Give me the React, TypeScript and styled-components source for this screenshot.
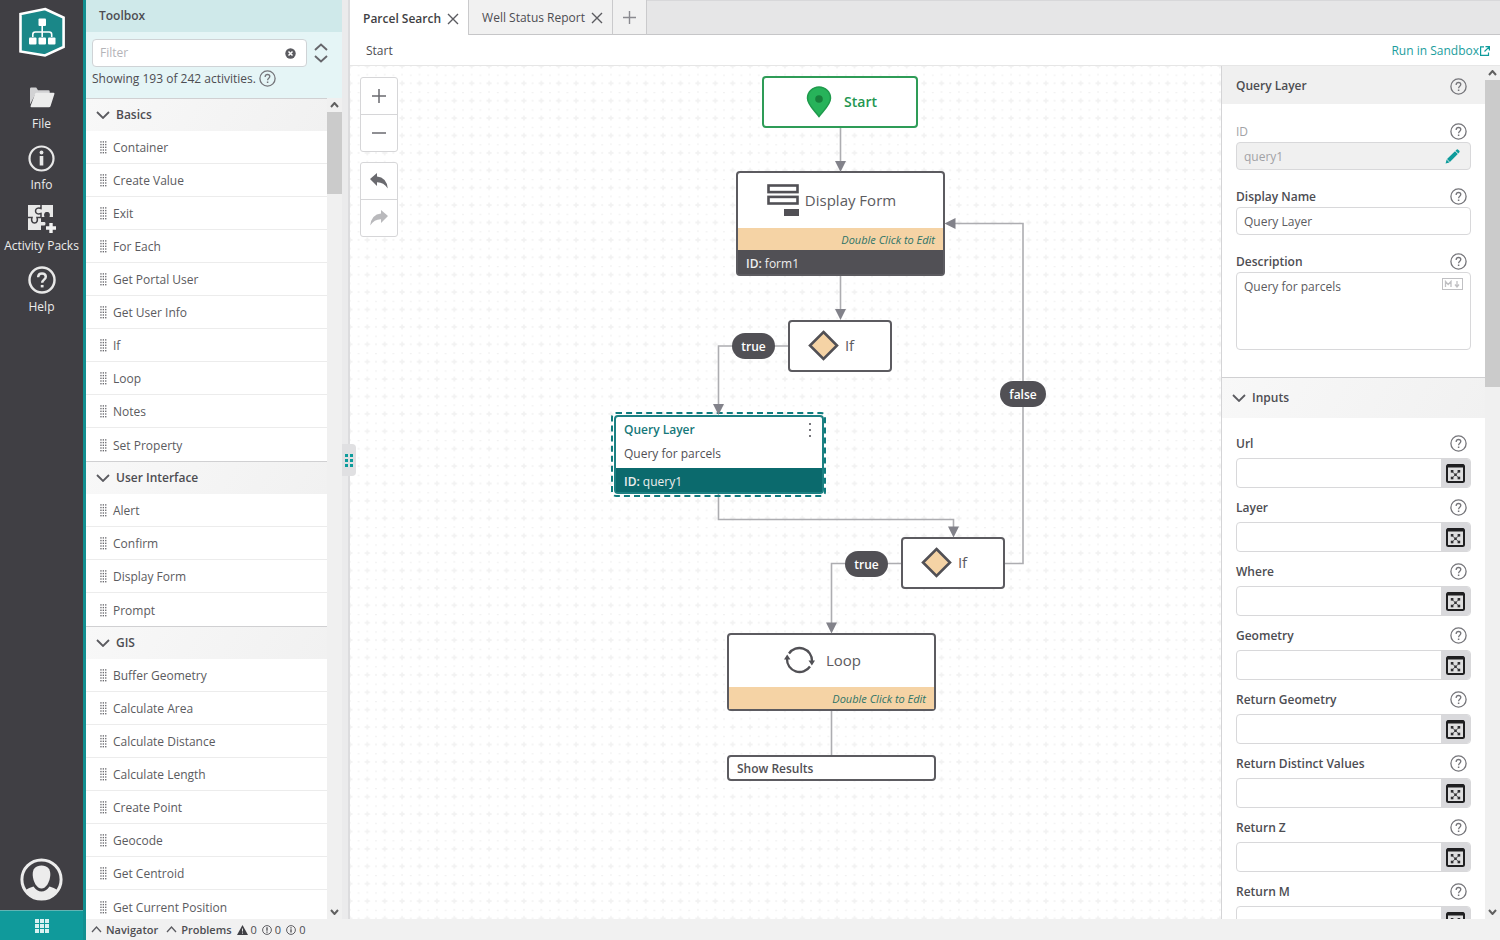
import React from "react";
import styled, { createGlobalStyle, css } from "styled-components";

const teal = "#0e9c9c";
const ink = "#4d4d52";
const slate = "#515055";

const GlobalStyle = createGlobalStyle`
  *, *::before, *::after { box-sizing: border-box; }
  body {
    margin: 0;
    font-family: "Open Sans", "Noto Sans", sans-serif;
    font-size: 12px;
    line-height: 16px;
    color: ${ink};
    background: #fff;
  }
  button, input, textarea { font: inherit; color: inherit; }
  button { border: 0; padding: 0; background: none; cursor: pointer; }
  h2, h3, p, ul { margin: 0; padding: 0; font-size: inherit; }
  ul { list-style: none; }
  svg { display: block; flex: none; }
`;

const Shell = styled.div`
  display: flex;
  height: 100vh;
  overflow: hidden;
`;

/* ---------- navigation rail ---------- */

const Rail = styled.nav`
  flex: none;
  display: flex;
  flex-direction: column;
  align-items: center;
  width: 86px;
  padding-top: 7px;
  background: #403f44;
  border-right: 3px solid #128f90;
`;

const RailItems = styled.div`
  display: flex;
  flex-direction: column;
  gap: 12px;
  margin: 26px 0 auto;
`;

const RailButton = styled.button`
  display: flex;
  flex-direction: column;
  align-items: center;
  gap: 5px;
  width: 83px;
  color: #ececec;
  font-size: 12px;
  white-space: nowrap;
`;

const RailIcon = styled.span`
  display: grid;
  place-items: center;
  height: 28px;
`;

const AvatarButton = styled.button`
  margin-bottom: 9px;
`;

const AppsButton = styled.button`
  display: grid;
  place-items: center;
  align-self: stretch;
  height: 30px;
  background: #109a9b;
  border-top: 1px solid #62b4b4;
`;

/* ---------- workspace ---------- */

const Workspace = styled.div`
  flex: 1;
  min-width: 0;
  display: flex;
  flex-direction: column;
`;

const Panes = styled.div`
  flex: 1;
  min-height: 0;
  display: flex;
`;

const StatusBar = styled.footer`
  flex: none;
  display: flex;
  align-items: center;
  gap: 8px;
  height: 21px;
  padding-left: 5px;
  background: #f1f1f1;
  font-size: 11px;
`;

const StatusButton = styled.button`
  display: flex;
  align-items: center;
  gap: 4px;
  font-weight: 600;
`;

const StatusCounts = styled.div`
  display: flex;
  gap: 5px;
  margin-left: -3px;
`;

const Count = styled.span`
  display: flex;
  align-items: center;
  gap: 3px;
`;

/* ---------- toolbox ---------- */

const Toolbox = styled.aside`
  flex: none;
  display: flex;
  flex-direction: column;
  width: 256px;
`;

const ToolboxTitle = styled.h2`
  height: 32px;
  padding: 8px 13px;
  font-weight: 600;
  background: #cfe9ea;
`;

const FilterArea = styled.div`
  display: flex;
  flex-direction: column;
  gap: 3px;
  height: 66px;
  padding: 7px 14px 0 6px;
  background: #e5f5f6;
`;

const FilterRow = styled.div`
  display: flex;
  align-items: center;
  gap: 7px;
`;

const FilterBox = styled.div`
  flex: 1;
  display: flex;
  align-items: center;
  height: 28px;
  padding: 0 10px 0 7px;
  background: #fff;
  border: 1px solid #cfd3d6;
  border-radius: 4px;
`;

const FilterInput = styled.input`
  flex: 1;
  min-width: 0;
  padding: 0;
  border: 0;
  outline: 0;
  background: none;
  &::placeholder { color: #b4b4b8; opacity: 1; }
`;

const FilterNote = styled.p`
  display: flex;
  align-items: center;
  gap: 3px;
  white-space: nowrap;
`;

const ScrollPane = styled.div`
  flex: 1;
  min-height: 0;
  display: flex;
`;

const ScrollContent = styled.div`
  flex: 1;
  min-width: 0;
  overflow: hidden;
`;

const ScrollTrack = styled.div`
  flex: none;
  display: flex;
  flex-direction: column;
  align-items: center;
  width: 15px;
  background: #f0f0f0;
`;

const ScrollArrow = styled.span`
  display: grid;
  place-items: center;
  height: 14px;
  margin-top: auto;
  &:first-child { margin-top: 0; }
`;

const ScrollThumb = styled.span<{ $size: number }>`
  width: 15px;
  height: ${(p) => p.$size}%;
  background: #cbcbcb;
`;

const GroupHeader = styled.h3<{ $tall?: boolean }>`
  height: ${(p) => (p.$tall ? 41 : 33)}px;
  border-top: 1px solid #d0d0d2;
  background: linear-gradient(120deg, #f8f8f8, #f1f1f1);
`;

const GroupToggle = styled.button`
  display: flex;
  align-items: center;
  gap: 6px;
  width: 100%;
  height: 100%;
  padding: 0 0 0 10px;
  font-weight: 600;
`;

const Activity = styled.li`
  display: flex;
  align-items: center;
  gap: 6px;
  height: 33px;
  padding: 2px 0 0 14px;
  border-bottom: 1px solid #ececec;
  color: #5b5b60;
  &:last-child { border-bottom: 0; }
`;

const Splitter = styled.div`
  flex: none;
  position: relative;
  width: 8px;
  background: #ebebec;
  border-right: 2px solid #dcdcde;
`;

const SplitterHandle = styled.button`
  position: absolute;
  z-index: 2;
  left: 0;
  top: 444px;
  display: grid;
  place-items: center;
  width: 14px;
  height: 32px;
  background: #e0e0e2;
  border-radius: 0 4px 4px 0;
`;

/* ---------- editor ---------- */

const Editor = styled.main`
  flex: 1;
  min-width: 0;
  display: flex;
  flex-direction: column;
`;

const TabBar = styled.div`
  flex: none;
  display: flex;
  height: 35px;
  background: #e6e6e7;
  box-shadow: inset 0 1px #d8d8da, inset 0 -1px #c6c6c8;
`;

const Tab = styled.div<{ $active?: boolean }>`
  display: flex;
  align-items: center;
  gap: 6px;
  padding: 2px 9px 0 13px;
  border-right: 1px solid #cacacc;
  ${(p) =>
    p.$active
      ? css`background: #fff; font-weight: 600; color: #3f3f44;`
      : css`background: #f1f1f1; border-bottom: 1px solid #c6c6c8;`}
`;

const AddTab = styled.button`
  width: 34px;
  display: grid;
  place-items: center;
  background: #f1f1f1;
  border-right: 1px solid #cacacc;
  border-bottom: 1px solid #c6c6c8;
`;

const TabLabel = styled.button`
  font-size: 12px;
  font-weight: inherit;
`;

const Crumbs = styled.div`
  flex: none;
  display: flex;
  align-items: center;
  justify-content: space-between;
  height: 31px;
  padding: 2px 10px 0 16px;
  border-bottom: 1px solid #e6e6e6;
`;

const SandboxLink = styled.a`
  display: flex;
  align-items: center;
  gap: 1px;
  color: #1a9d9d;
  text-decoration: none;
`;

const EditorBody = styled.div`
  flex: 1;
  min-height: 0;
  display: flex;
`;

const Canvas = styled.section`
  flex: 1;
  min-width: 0;
  position: relative;
  overflow: hidden;
`;

const Wires = styled.svg`
  position: absolute;
  inset: 0;
  width: 100%;
  height: 100%;
`;

const CanvasTools = styled.div`
  position: absolute;
  left: 10px;
  top: 11px;
  display: flex;
  flex-direction: column;
  gap: 10px;
`;

const ToolGroup = styled.div`
  width: 38px;
  background: #fff;
  border: 1px solid #d6d6d8;
  border-radius: 3px;
`;

const ToolButton = styled.button`
  display: grid;
  place-items: center;
  width: 100%;
  height: 36px;
  & + & {
    height: 37px;
    border-top: 1px solid #d6d6d8;
  }
`;

const Node = styled.article<{ $x: number; $y: number; $w: number; $h: number; $color?: string }>`
  position: absolute;
  left: ${(p) => p.$x}px;
  top: ${(p) => p.$y}px;
  width: ${(p) => p.$w}px;
  height: ${(p) => p.$h}px;
  display: flex;
  flex-direction: column;
  background: #fff;
  border: 2px solid ${(p) => p.$color || "#5c5b60"};
  border-radius: 4px;
  color: ${slate};
`;

const SelectionRing = styled.div<{ $x: number; $y: number; $w: number; $h: number }>`
  position: absolute;
  left: ${(p) => p.$x}px;
  top: ${(p) => p.$y}px;
  width: ${(p) => p.$w}px;
  height: ${(p) => p.$h}px;
  border: 2px dashed #0f7c7e;
  border-radius: 5px;
`;

const NodeHead = styled.div<{ $gap: number; $color?: string }>`
  flex: 1;
  display: flex;
  align-items: center;
  justify-content: center;
  gap: ${(p) => p.$gap}px;
  padding: ${(p) => (p.$color ? "0 0 0 3px" : "0 18px 2px 0")};
  font-size: ${(p) => (p.$color ? 14 : 15)}px;
  line-height: 20px;
  font-weight: ${(p) => (p.$color ? 600 : 400)};
  color: ${(p) => p.$color || "#5c5b60"};
`;

const NodeHint = styled.p`
  height: 22px;
  padding: 4px 8px 0;
  background: #f5d3a5;
  color: #2f7468;
  font-size: 11px;
  font-style: italic;
  text-align: right;
`;

const NodeId = styled.p<{ $color: string }>`
  height: 24px;
  padding: 6px 8px 0;
  background: ${(p) => p.$color};
  color: #eee;
  b { font-weight: 600; }
`;

const NodeTitleRow = styled.div`
  display: flex;
  align-items: center;
  justify-content: space-between;
  padding: 5px 11px 0 8px;
  color: #16787a;
  font-weight: 600;
`;

const NodeText = styled.p`
  flex: 1;
  padding: 8px 8px 0;
`;

const NodeCaption = styled.p`
  padding: 4px 8px 0;
  font-weight: 600;
`;

const Branch = styled.span<{ $x: number; $y: number; $w: number }>`
  position: absolute;
  left: ${(p) => p.$x}px;
  top: ${(p) => p.$y}px;
  width: ${(p) => p.$w}px;
  height: 26px;
  padding-top: 1px;
  border-radius: 13px;
  background: ${slate};
  color: #fff;
  font-weight: 600;
  line-height: 26px;
  text-align: center;
`;

/* ---------- properties ---------- */

const Properties = styled.aside`
  flex: none;
  display: flex;
  width: 279px;
  border-left: 1px solid #d4d4d6;
`;

const PropertiesTitle = styled.h2`
  display: flex;
  align-items: center;
  justify-content: space-between;
  height: 38px;
  padding: 2px 18px 0 14px;
  background: #f0f0f0;
  font-weight: 600;
`;

const GeneralFields = styled.div`
  display: flex;
  flex-direction: column;
  gap: 15px;
  padding: 16px 14px 27px;
`;

const InputFields = styled.div`
  display: flex;
  flex-direction: column;
  gap: 8px;
  padding: 14px 14px 0;
`;

const Field = styled.div<{ $gap?: number }>`
  display: flex;
  flex-direction: column;
  gap: ${(p) => p.$gap || 0}px;
`;

const FieldHead = styled.div`
  display: flex;
  align-items: center;
  justify-content: space-between;
  height: 22px;
  padding-right: 4px;
`;

const FieldLabel = styled.label<{ $muted?: boolean }>`
  padding-top: 2px;
  font-weight: ${(p) => (p.$muted ? 400 : 600)};
  color: ${(p) => (p.$muted ? "#a2a2a6" : ink)};
`;

const FieldBox = styled.div<{ $height: number; $muted?: boolean }>`
  display: flex;
  align-items: ${(p) => (p.$height > 40 ? "flex-start" : "center")};
  height: ${(p) => p.$height}px;
  overflow: hidden;
  border: 1px solid #d8d8da;
  border-radius: 4px;
  background: ${(p) => (p.$muted ? "#f0f0f0" : "#fff")};
  color: ${(p) => (p.$muted ? "#a2a2a6" : "#5b5b60")};
`;

const TextInput = styled.input`
  flex: 1;
  min-width: 0;
  padding: 2px 7px 0;
  border: 0;
  outline: 0;
  background: none;
`;

const TextArea = styled.textarea`
  flex: 1;
  min-width: 0;
  height: 100%;
  padding: 6px 7px;
  border: 0;
  outline: 0;
  resize: none;
  background: none;
`;

const EditButton = styled.button`
  padding-right: 10px;
`;

const MarkdownMark = styled.span`
  padding: 5px 7px;
`;

const ExpressionButton = styled.button`
  display: grid;
  place-items: center;
  align-self: stretch;
  width: 29px;
  background: #d9d9dc;
`;

/* ---------- icons ---------- */

const HelpIcon = ({ size = 17, color = "#75757a", weight = 1.3 }) => (
  <svg width={size} height={size} viewBox="0 0 17 17" fill="none" stroke={color} strokeWidth={weight}>
    <circle cx="8.5" cy="8.5" r="7.6" />
    <path d="M6.2 6.9V6.5C6.3 5.2 7.2 4.5 8.5 4.5s2.3.8 2.3 2c0 1.7-2.2 1.8-2.2 3.7" />
    <path d="M8.6 11.5v1.5" strokeWidth={weight + 0.2} />
  </svg>
);

const Chevron = ({ up, w = 14, h = 8, color = "#5b5b60", weight = 1.8 }: { up?: boolean; w?: number; h?: number; color?: string; weight?: number }) => (
  <svg width={w} height={h} viewBox={`0 0 ${w} ${h}`} fill="none" stroke={color} strokeWidth={weight}>
    <path d={up ? `M1 ${h - 1}L${w / 2} 1L${w - 1} ${h - 1}` : `M1 1L${w / 2} ${h - 1}L${w - 1} 1`} />
  </svg>
);

const DotsIcon = ({ cols, rows, size, step, color }: { cols: number; rows: number; size: number; step: number; color: string }) => {
  const w = (cols - 1) * step + size;
  const h = (rows - 1) * step + size;
  return (
    <svg width={w} height={h} viewBox={`0 0 ${w} ${h}`} fill={color}>
      {Array.from({ length: cols * rows }, (_, i) => (
        <rect key={i} x={(i % cols) * step} y={Math.floor(i / cols) * step} width={size} height={size} />
      ))}
    </svg>
  );
};

const GripIcon = () => (
  <svg width="7" height="14" viewBox="0 0 7 14" fill="#6a6a6f">
    {[0, 1, 2, 3, 4].map((r) =>
      [0, 1, 2].map((c) => <rect key={`${r}${c}`} x={c * 2.4 + 0.3} y={r * 2.7 + 0.2} width="1.3" height="1.4" />)
    )}
  </svg>
);

const LogoIcon = () => (
  <svg width="48" height="50" viewBox="0 0 48 50">
    <path d="M27 2L45.600 10.500V40L27 48.500L2.500 44.500V7z" fill="#1a8788" stroke="#fff" strokeWidth="2.6" />
    <g fill="#fff">
      <rect x="20.5" y="11.5" width="7.5" height="7.5" rx="1" />
      <rect x="11" y="30.5" width="7.5" height="7" rx="1" />
      <rect x="20.5" y="30.5" width="7.5" height="7" rx="1" />
      <rect x="30" y="30.5" width="7.5" height="7" rx="1" />
    </g>
    <path d="M24.2 19v11M14.8 30v-2.5q0-2.5 2.5-2.5h13.9q2.5 0 2.5 2.5V30" fill="none" stroke="#fff" strokeWidth="1.6" />
  </svg>
);

const FolderIcon = () => (
  <svg width="26" height="21" viewBox="0 0 26 21">
    <path d="M1 17.500V1.700Q1 .5 2.200.5h5L9 3.200h10.500q1.200 0 1.200 1.200V8H6z" fill="#d2d2d4" />
    <path d="M7.500 5.800H24.500q1.300 0 .9 1.200L21.500 19.200q-.4 1-1.500 1H2.500Q1.200 20.200 1.600 19L6 7q.5-1.200 1.500-1.200z" fill="#ececec" />
  </svg>
);

const InfoIcon = () => (
  <svg width="27" height="27" viewBox="0 0 27 27" fill="none" stroke="#e8e8e8">
    <circle cx="13.500" cy="13.500" r="12" strokeWidth="2.200" />
    <path d="M13.500 11v9.500" strokeWidth="3.600" />
    <circle cx="13.500" cy="7.500" r="1.900" fill="#e8e8e8" stroke="none" />
  </svg>
);

const PuzzleIcon = () => (
  <svg width="28" height="28" viewBox="0 0 28 28">
    <path d="M0 0H25V12H21.500C22.500 9 21.500 7 19 7S15.500 9 16.500 12H13V17H16.500Q17.500 17 17.500 18.500T16.500 20.500H13V25H0z" fill="#e8e8e8" />
    <path d="M13 0V3.500C10 2.500 7.500 3.500 7.500 6S10 9.500 13 8.500V12.500M0 12.500H4C3 15.500 4 18 6.500 18S10 15.500 9 12.500H13" fill="none" stroke="#403f44" strokeWidth="1.500" />
    <path d="M23 18V28M18 23H28" stroke="#f2f2f2" strokeWidth="3.400" />
  </svg>
);

const AvatarIcon = () => (
  <svg width="43" height="43" viewBox="0 0 43 43">
    <circle cx="21.500" cy="21.500" r="19.600" fill="#403f44" stroke="#ececec" strokeWidth="3" />
    <path d="M21.500 7.500C27.500 7.500 30.500 11 30.300 17C30 24 26 30.500 21.500 30.500S13 24 12.700 17C12.500 11 15.500 7.500 21.500 7.500z" fill="#ececec" />
    <path d="M5.500 32Q9 29.500 13.500 28.500Q17 33.500 21.500 33.500T29.500 28.500Q34 29.500 37.500 32Q31 40.500 21.500 40.500T5.500 32z" fill="#ececec" />
  </svg>
);

const ClearIcon = () => (
  <svg width="11" height="11" viewBox="0 0 11 11">
    <circle cx="5.500" cy="5.500" r="5.200" fill="#5b5b60" />
    <path d="M3.500 3.500l4 4M7.500 3.500l-4 4" stroke="#fff" strokeWidth="1.500" />
  </svg>
);

const SortIcon = () => (
  <svg width="14" height="20" viewBox="0 0 14 20" fill="none" stroke="#66666b" strokeWidth="1.900">
    <path d="M1 7L7 1.500L13 7M1 13L7 18.500L13 13" />
  </svg>
);

const CloseIcon = () => (
  <svg width="12" height="12" viewBox="0 0 12 12" stroke="#5b5b60" strokeWidth="1.400">
    <path d="M1 1l10 10M11 1L1 11" />
  </svg>
);

const PlusIcon = ({ minus, size = 14, color = "#6a6a6f" }: { minus?: boolean; size?: number; color?: string }) => (
  <svg width={size} height={size} viewBox="0 0 14 14" stroke={color} strokeWidth="1.500">
    <path d={minus ? "M0 7H14" : "M0 7H14M7 0V14"} />
  </svg>
);

const ArrowIcon = ({ redo }: { redo?: boolean }) => (
  <svg width="18" height="16" viewBox="0 0 18 16" fill={redo ? "#b9b9bc" : "#6a6a6f"}>
    <path
      transform={redo ? "translate(18 0) scale(-1 1)" : undefined}
      d="M0 6L7 0V3.600Q16.500 4.500 17.800 15.500Q13.500 9 7 9.200V13z"
    />
  </svg>
);

const ExternalIcon = () => (
  <svg width="10" height="10" viewBox="0 0 10 10" fill="none" stroke={teal} strokeWidth="1.200">
    <path d="M4 .9H.6V9.400H8.500V6.500M5.500 .7H9.400V4.500M9.200.9L4.500 5.500" />
  </svg>
);

const PencilIcon = () => (
  <svg width="15" height="15" viewBox="0 0 15 15" fill={teal}>
    <path d="M.6 14.400L1.600 10.500L4.500 13.400zM2 10.100L10 2.200L12.800 5L4.900 13zM10.500 1.700L11.800.6Q12.500 0 13.200.7L14.300 1.800Q15 2.500 14.400 3.200L13.300 4.500z" />
  </svg>
);

const MarkdownIcon = () => (
  <svg width="21" height="12" viewBox="0 0 21 12" fill="none" stroke="#c0c0c3">
    <rect x=".5" y=".5" width="20" height="11" />
    <path d="M3.500 9V3.500L6.200 6.500L9 3.500V9M15 3V8M13 6.500L15 9L17 6.500" strokeWidth="1.300" />
  </svg>
);

const ExpressionIcon = () => (
  <svg width="19" height="19" viewBox="0 0 19 19">
    <rect x="1" y="1" width="17" height="17" rx="1.500" fill="#dededf" stroke="#1f1f21" strokeWidth="2" />
    <path d="M1 2H18" stroke="#1f1f21" strokeWidth="3" />
    <path d="M6 7.500l7 6.500M13 7.500l-7 6.500" stroke="#4a4a4d" strokeWidth=".8" />
    <g fill="#2f2f32">
      <rect x="4.800" y="6" width="2.600" height="2.600" />
      <rect x="11.600" y="6" width="2.600" height="2.600" />
      <rect x="4.800" y="12.700" width="2.600" height="2.600" />
      <rect x="11.600" y="12.700" width="2.600" height="2.600" />
      <rect x="8.300" y="9.500" width="2.400" height="2.400" />
    </g>
  </svg>
);

const WarningIcon = () => (
  <svg width="11" height="10" viewBox="0 0 11 10">
    <path d="M5.500 0L11 10H0z" fill="#3f3f44" />
    <path d="M5.500 3.500V6.500M5.500 7.500V8.700" stroke="#ddd" strokeWidth="1" />
  </svg>
);

const NoticeIcon = ({ info }: { info?: boolean }) => (
  <svg width="10" height="10" viewBox="0 0 10 10" fill="none" stroke={ink}>
    <circle cx="5" cy="5" r="4.400" strokeWidth=".9" />
    <path d={info ? "M5 4.300V7.600M5 2.300V3.500" : "M5 2.300V5.800M5 6.600V7.800"} strokeWidth="1.300" />
  </svg>
);

const PinIcon = () => (
  <svg width="26" height="32" viewBox="0 0 26 32">
    <path d="M13 30.500C9.500 25.500 1.500 19 1.500 12.300a11.500 11.300 0 0 1 23 0C24.500 19 16.500 25.500 13 30.500z" fill="#27b35a" stroke="#1f9a4c" strokeWidth="1.500" />
    <circle cx="13" cy="13" r="3.800" fill="#17803c" />
  </svg>
);

const FormIcon = () => (
  <svg width="32" height="32" viewBox="0 0 32 32" fill="none" stroke={slate} strokeWidth="2.600">
    <rect x="1.500" y="1.500" width="29" height="6.600" />
    <rect x="1.500" y="12.900" width="29" height="6.600" />
    <rect x="17" y="25" width="15" height="7" fill={slate} stroke="none" />
  </svg>
);

const DiamondIcon = () => (
  <svg width="31" height="31" viewBox="0 0 31 31">
    <path d="M15.500 2L29 15.500L15.500 29L2 15.500z" fill="#f5d3a5" stroke={slate} strokeWidth="2.600" />
  </svg>
);

const LoopIcon = () => (
  <svg width="31" height="28" viewBox="0 0 31 28" fill="none" stroke={slate} strokeWidth="2.300">
    <path d="M5 7.500A12.600 12.600 0 0 1 28 15M26 20.500A12.600 12.600 0 0 1 3 13" />
    <path d="M24.500 14.500H31L27.900 19.500zM0 13.500H6.500L3.200 8.500z" fill={slate} stroke="none" />
  </svg>
);

/* ---------- data ---------- */

const groups = [
  {
    name: "Basics",
    items: ["Container", "Create Value", "Exit", "For Each", "Get Portal User", "Get User Info", "If", "Loop", "Notes", "Set Property"],
  },
  { name: "User Interface", items: ["Alert", "Confirm", "Display Form", "Prompt"] },
  {
    name: "GIS",
    items: ["Buffer Geometry", "Calculate Area", "Calculate Distance", "Calculate Length", "Create Point", "Geocode", "Get Centroid", "Get Current Position"],
  },
];

const inputs = ["Url", "Layer", "Where", "Geometry", "Return Geometry", "Return Distinct Values", "Return Z", "Return M"];

const railItems = [
  { label: "File", icon: <FolderIcon /> },
  { label: "Info", icon: <InfoIcon /> },
  { label: "Activity Packs", icon: <PuzzleIcon /> },
  { label: "Help", icon: <HelpIcon size={28} color="#e8e8e8" weight={1.5} /> },
];

const wires = [
  "M490.500 62V100",
  "M490.500 210V248",
  "M438 280H368.500V342",
  "M368.500 428V453.500H603.500V465",
  "M655 497.500H673V157.500H602",
  "M551 497.500H481.500V562",
  "M481.500 645V689",
];

const arrowHeads = [
  [490.5, 106],
  [490.5, 254],
  [368.5, 349],
  [603.5, 471.5],
  [481.5, 567.5],
];

/* ---------- parts ---------- */

const Scrollbar = ({ size }: { size: number }) => (
  <ScrollTrack aria-hidden="true">
    <ScrollArrow><Chevron up w={9} h={6} weight={2} color="#606060" /></ScrollArrow>
    <ScrollThumb $size={size} />
    <ScrollArrow><Chevron w={9} h={6} weight={2} color="#606060" /></ScrollArrow>
  </ScrollTrack>
);

const HelpButton = ({ about }: { about: string }) => (
  <button aria-label={`Help: ${about}`}><HelpIcon /></button>
);

const Flow = () => (
  <Canvas>
    <Wires aria-hidden="true">
      <defs>
        <pattern id="grid" x="8.600" y="8.600" width="17.400" height="17.400" patternUnits="userSpaceOnUse">
          <path d="M6.200 8.700H11.200M8.700 6.200V11.200" stroke="#f2f2f2" strokeWidth="1.700" />
          <path d="M0 8.700H.8M16.600 8.700H17.400M8.700 0V.8M8.700 16.600V17.400M0 .5H.8M16.600 .5H17.400" stroke="#efefef" strokeWidth="1.400" />
        </pattern>
      </defs>
      <rect width="100%" height="100%" fill="url(#grid)" />
      {wires.map((d) => (
        <path key={d} d={d} fill="none" stroke="#adadb1" strokeWidth="1.600" />
      ))}
    </Wires>

    <Node $x={412} $y={10} $w={156} $h={52} $color="#2e9c57">
      <NodeHead $gap={12} $color="#239650"><PinIcon />Start</NodeHead>
    </Node>

    <Node $x={386} $y={105} $w={209} $h={105}>
      <NodeHead $gap={6}><FormIcon />Display Form</NodeHead>
      <NodeHint>Double Click to Edit</NodeHint>
      <NodeId $color={slate}><b>ID:</b> form1</NodeId>
    </Node>

    <Node $x={438} $y={254} $w={104} $h={52}>
      <NodeHead $gap={6}><DiamondIcon />If</NodeHead>
    </Node>

    <SelectionRing $x={261} $y={346} $w={215} $h={85} />
    <Node $x={264} $y={349} $w={210} $h={79} $color="#1c8082">
      <NodeTitleRow>
        Query Layer
        <button aria-label="Activity menu"><DotsIcon cols={1} rows={3} size={2} step={6} color="#77777c" /></button>
      </NodeTitleRow>
      <NodeText>Query for parcels</NodeText>
      <NodeId $color="#0b6a6d"><b>ID:</b> query1</NodeId>
    </Node>

    <Node $x={551} $y={471} $w={104} $h={52}>
      <NodeHead $gap={6}><DiamondIcon />If</NodeHead>
    </Node>

    <Node $x={377} $y={567} $w={209} $h={78}>
      <NodeHead $gap={11}><LoopIcon />Loop</NodeHead>
      <NodeHint>Double Click to Edit</NodeHint>
    </Node>

    <Node $x={377} $y={689} $w={209} $h={26}>
      <NodeCaption>Show Results</NodeCaption>
    </Node>

    <Wires as="svg" aria-hidden="true" pointerEvents="none" fill="#82828a">
      {arrowHeads.map(([x, y]) => (
        <path key={`${x}-${y}`} d={`M${x - 5.500} ${y - 11}h11l-5.500 11z`} />
      ))}
      <path d="M594.500 157.500l11-5.500v11z" />
    </Wires>

    <Branch $x={382} $y={267} $w={43}>true</Branch>
    <Branch $x={650} $y={315} $w={46}>false</Branch>
    <Branch $x={495} $y={485} $w={43}>true</Branch>

    <CanvasTools>
      <ToolGroup>
        <ToolButton aria-label="Zoom in"><PlusIcon /></ToolButton>
        <ToolButton aria-label="Zoom out"><PlusIcon minus /></ToolButton>
      </ToolGroup>
      <ToolGroup>
        <ToolButton aria-label="Undo"><ArrowIcon /></ToolButton>
        <ToolButton aria-label="Redo"><ArrowIcon redo /></ToolButton>
      </ToolGroup>
    </CanvasTools>
  </Canvas>
);

const PropertiesPanel = () => (
  <Properties>
    <ScrollContent>
      <PropertiesTitle>Query Layer<HelpButton about="Query Layer" /></PropertiesTitle>
      <GeneralFields>
        <Field>
          <FieldHead><FieldLabel $muted htmlFor="id">ID</FieldLabel><HelpButton about="ID" /></FieldHead>
          <FieldBox $height={28} $muted>
            <TextInput id="id" readOnly value="query1" />
            <EditButton aria-label="Edit ID"><PencilIcon /></EditButton>
          </FieldBox>
        </Field>
        <Field>
          <FieldHead><FieldLabel htmlFor="name">Display Name</FieldLabel><HelpButton about="Display Name" /></FieldHead>
          <FieldBox $height={28}><TextInput id="name" defaultValue="Query Layer" /></FieldBox>
        </Field>
        <Field>
          <FieldHead><FieldLabel htmlFor="description">Description</FieldLabel><HelpButton about="Description" /></FieldHead>
          <FieldBox $height={78}>
            <TextArea id="description" defaultValue="Query for parcels" />
            <MarkdownMark><MarkdownIcon /></MarkdownMark>
          </FieldBox>
        </Field>
      </GeneralFields>
      <GroupHeader $tall><GroupToggle><Chevron />Inputs</GroupToggle></GroupHeader>
      <InputFields>
        {inputs.map((name) => (
          <Field key={name} $gap={4}>
            <FieldHead><FieldLabel htmlFor={name}>{name}</FieldLabel><HelpButton about={name} /></FieldHead>
            <FieldBox $height={30}>
              <TextInput id={name} />
              <ExpressionButton aria-label={`Expression for ${name}`}><ExpressionIcon /></ExpressionButton>
            </FieldBox>
          </Field>
        ))}
      </InputFields>
    </ScrollContent>
    <Scrollbar size={36} />
  </Properties>
);

export default function App() {
  return (
    <>
      <GlobalStyle />
      <Shell>
        <Rail>
          <LogoIcon />
          <RailItems>
            {railItems.map((item) => (
              <RailButton key={item.label}>
                <RailIcon>{item.icon}</RailIcon>
                {item.label}
              </RailButton>
            ))}
          </RailItems>
          <AvatarButton aria-label="Account"><AvatarIcon /></AvatarButton>
          <AppsButton aria-label="Apps"><DotsIcon cols={3} rows={3} size={4} step={5} color="#d9f1f1" /></AppsButton>
        </Rail>

        <Workspace>
          <Panes>
            <Toolbox>
              <ToolboxTitle>Toolbox</ToolboxTitle>
              <FilterArea>
                <FilterRow>
                  <FilterBox>
                    <FilterInput aria-label="Filter activities" placeholder="Filter" />
                    <button aria-label="Clear filter"><ClearIcon /></button>
                  </FilterBox>
                  <button aria-label="Expand or collapse all"><SortIcon /></button>
                </FilterRow>
                <FilterNote>Showing 193 of 242 activities.<HelpButton about="activities" /></FilterNote>
              </FilterArea>
              <ScrollPane>
                <ScrollContent>
                  {groups.map((group) => (
                    <section key={group.name}>
                      <GroupHeader><GroupToggle><Chevron />{group.name}</GroupToggle></GroupHeader>
                      <ul>
                        {group.items.map((item) => (
                          <Activity key={item}><GripIcon />{item}</Activity>
                        ))}
                      </ul>
                    </section>
                  ))}
                </ScrollContent>
                <Scrollbar size={10} />
              </ScrollPane>
            </Toolbox>

            <Splitter>
              <SplitterHandle aria-label="Resize toolbox"><DotsIcon cols={2} rows={3} size={3} step={5} color={teal} /></SplitterHandle>
            </Splitter>

            <Editor>
              <TabBar>
                <Tab $active><TabLabel>Parcel Search</TabLabel><button aria-label="Close Parcel Search"><CloseIcon /></button></Tab>
                <Tab><TabLabel>Well Status Report</TabLabel><button aria-label="Close Well Status Report"><CloseIcon /></button></Tab>
                <AddTab aria-label="New tab"><PlusIcon size={13} color="#8a8a90" /></AddTab>
              </TabBar>
              <Crumbs>
                <span>Start</span>
                <SandboxLink href="#sandbox">Run in Sandbox<ExternalIcon /></SandboxLink>
              </Crumbs>
              <EditorBody>
                <Flow />
                <PropertiesPanel />
              </EditorBody>
            </Editor>
          </Panes>

          <StatusBar>
            <StatusButton><Chevron up w={11} h={7} weight={1.3} />Navigator</StatusButton>
            <StatusButton><Chevron up w={11} h={7} weight={1.3} />Problems</StatusButton>
            <StatusCounts>
              <Count><WarningIcon />0</Count>
              <Count><NoticeIcon />0</Count>
              <Count><NoticeIcon info />0</Count>
            </StatusCounts>
          </StatusBar>
        </Workspace>
      </Shell>
    </>
  );
}
